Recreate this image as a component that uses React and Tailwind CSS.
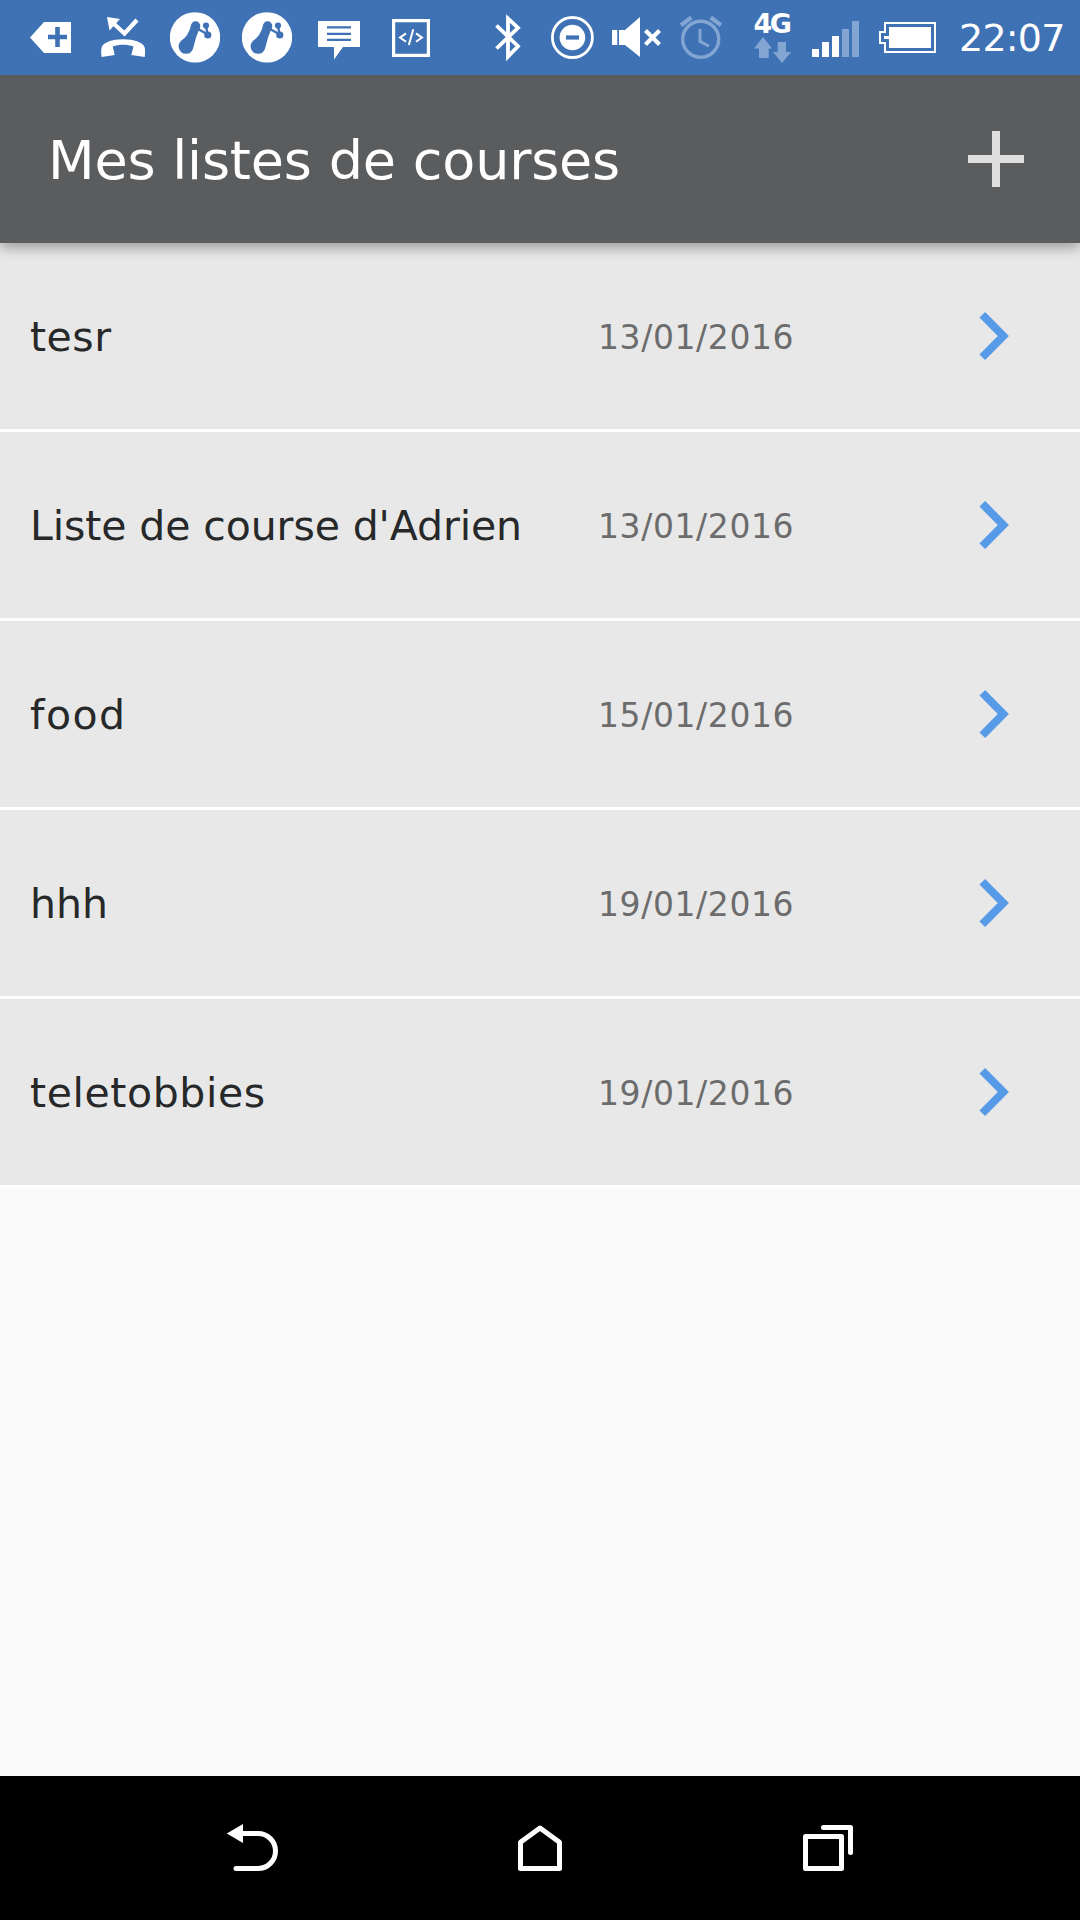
const LISTS = [
  { name: "tesr", date: "13/01/2016", tracking: "tracking-[0.5px]" },
  { name: "Liste de course d'Adrien", date: "13/01/2016", tracking: "tracking-[-0.1px]" },
  { name: "food", date: "15/01/2016", tracking: "tracking-[1.5px]" },
  { name: "hhh", date: "19/01/2016", tracking: "tracking-normal" },
  { name: "teletobbies", date: "19/01/2016", tracking: "tracking-[0.6px]" },
];

function Molecule() {
  return (
    <svg viewBox="170 0 50 75" className="h-[75px] w-[50px]" fill="#3f72b5" stroke="#3f72b5">
      <circle cx="195" cy="37.4" r="25.2" fill="#fff" stroke="none" />
      <circle cx="186" cy="46.4" r="7.4" stroke="none" />
      <circle cx="195.6" cy="26" r="4.7" stroke="none" />
      <circle cx="206" cy="25.6" r="3.1" stroke="none" />
      <circle cx="207.8" cy="35" r="3.6" stroke="none" />
      <path d="M181 41Q188.500 36 191.200 25L200 27.500Q196 36 193.400 47Z" stroke="none" />
      <path d="M197 28.500L207 34M206 26L207.600 35" fill="none" strokeWidth="2.400" />
    </svg>
  );
}

function StatusBar() {
  return (
    <div className="relative z-20 flex h-[75px] items-center bg-[#3f72b5] pl-[30px] text-white">
      <svg viewBox="30 0 41 75" className="h-[75px] w-[41px]" fill="#fff">
        <path d="M30 37.500L44 22H71V53H44Z" />
        <path d="M48 37H67M57.500 27V47" stroke="#3f72b5" strokeWidth="4.600" />
      </svg>
      <svg viewBox="100 0 46 75" className="ml-[29px] h-[75px] w-[46px]" fill="#fff">
        <path d="M107 17L120 19L109.500 30.500Z" />
        <path d="M112 22L124.500 33.500L137 20" fill="none" stroke="#fff" strokeWidth="4.200" />
        <path d="M101.600 57C101.100 53 101 50 101.600 47.500C103 42.500 112 39.300 123 39.300S143.500 42.500 144.700 47.500C145.300 50 145.200 53 144.700 57L131.300 55L133.500 46.500C127 44 119 44 112.700 46.500L114.700 55Z" />
      </svg>
      <div className="ml-[24px] flex gap-[22px]">
        <Molecule />
        <Molecule />
      </div>
      <svg viewBox="318 0 42 75" className="ml-[26px] h-[75px] w-[42px]" fill="#fff">
        <path d="M318 21H360V47H343L334 59.500V47H318Z" />
        <path d="M327 27.300H351M327 33.800H351M327 39.800H351" stroke="#3f72b5" strokeWidth="2.200" />
      </svg>
      <svg viewBox="392 0 38 75" className="ml-[32px] h-[75px] w-[38px]" fill="none" stroke="#fff">
        <path d="M393.600 20.600H428.400V55.400H393.600Z" strokeWidth="3.200" />
        <path d="M406 33.400L400 37.600L406 41.800M416 33.400L422 37.600L416 41.800M413.300 29.300L408.800 45" strokeWidth="2" />
      </svg>
      <svg viewBox="495 0 27 75" className="ml-[65px] h-[75px] w-[27px]" fill="none" stroke="#fff" strokeWidth="3.800">
        <path d="M496.500 25.500L518 46.200L508 56.500V18.500L518 27.800L496.500 48.500" />
      </svg>
      <svg viewBox="550 0 44 75" className="ml-[28px] h-[75px] w-[44px]" fill="none">
        <circle cx="572.400" cy="37.500" r="20" stroke="#fff" strokeWidth="2.800" />
        <circle cx="572.400" cy="37.500" r="12.800" fill="#fff" />
        <path d="M566 37.500H579" stroke="#3f72b5" strokeWidth="4.200" />
      </svg>
      <svg viewBox="612 0 50 75" className="ml-[18px] h-[75px] w-[50px]" fill="#fff">
        <path d="M612 30H617.300V45H612ZM619 30H625L640 17V57L625 45H619Z" />
        <path d="M645.500 30.500L659.500 44.500M659.500 30.500L645.500 44.500" stroke="#fff" strokeWidth="4.200" />
      </svg>
      <svg viewBox="679 0 44 75" className="ml-[17px] h-[75px] w-[44px]" fill="none" stroke="#83a5d2">
        <circle cx="700.700" cy="39.300" r="18" strokeWidth="3.400" />
        <path d="M700 29V41.300L709 46.300" strokeWidth="3" />
        <path d="M681 25.200L691.300 17.500M710.700 17.500L721 25.200" strokeWidth="4.200" />
      </svg>
      <div className="ml-[25px] flex h-[75px] w-[49px] flex-col items-center pt-[10px]">
        <span className="h-[27px] pr-[2px] text-[27px] leading-[28px] font-bold tracking-[-2.5px] whitespace-nowrap">4G</span>
        <svg viewBox="748 37 49 26" className="h-[26px] w-[49px]" fill="#83a5d2">
          <path d="M763 37L772.200 48.500H768.700V58H759V48.500H754ZM777.700 42H786V52H791.200L782 63L773 52H777.700Z" />
        </svg>
      </div>
      <svg viewBox="812 0 47 75" className="ml-[15px] h-[75px] w-[47px]">
        <path d="M812 49H819V57H812ZM822 42H829V57H822ZM832 36H839V57H832Z" fill="#fff" />
        <path d="M842 29H849V57H842ZM852 21H859V57H852Z" fill="#83a5d2" />
      </svg>
      <svg viewBox="879 0 57 75" className="ml-[20px] h-[75px] w-[57px]">
        <path d="M885 23H935V52H885V43H880V32H885Z" fill="none" stroke="#fff" strokeWidth="2" />
        <path d="M889 27H931V48H889V39H884V36H889Z" fill="#fff" />
      </svg>
      <span className="ml-[23px] pt-[1px] text-[38px] leading-none tracking-[-0.8px] whitespace-nowrap">22:07</span>
    </div>
  );
}

function Header() {
  return (
    <header className="relative z-10 flex h-[168px] items-center justify-between bg-[#5b5c5e] pr-[56px] pl-[48px] shadow-[0_5px_12px_rgba(0,0,0,0.32)]">
      <h1 className="pt-[4px] text-[54px] leading-none tracking-[-0.2px] whitespace-nowrap text-white">Mes listes de courses</h1>
      <svg viewBox="0 0 56 56" className="size-[56px]" fill="none" stroke="#dedede" strokeWidth="8">
        <path d="M0 28H24M32 28H56M28 0V56" />
      </svg>
    </header>
  );
}

function ListRow({ name, date, tracking }) {
  return (
    <li className="flex h-[189px] items-center border-b-[3px] border-white bg-[#e8e8e8] pl-[30px]">
      <span className={"w-[568px] pt-[2px] text-[41px] leading-none whitespace-nowrap text-[#262829] " + tracking}>{name}</span>
      <span className="w-[381px] pt-[2px] text-[33px] leading-none tracking-[0.6px] whitespace-nowrap text-[#6c6c6c]">{date}</span>
      <svg viewBox="0 0 30 48" className="h-[48px] w-[30px]" fill="none" stroke="#579ae8" strokeWidth="8">
        <path d="M3.300 2.800L24.300 24L3.300 45.200" />
      </svg>
    </li>
  );
}

function NavBar() {
  return (
    <nav className="flex h-[144px] items-center bg-black pl-[226px]">
      <svg viewBox="226 1776 54 144" className="h-[144px] w-[54px]" fill="none" stroke="#fff" strokeWidth="5">
        <path d="M226.800 1833.500L243 1824V1843Z" fill="#fff" stroke="none" />
        <path d="M241 1833.500H258A17.500 17.500 0 0 1 258 1868.500H236" strokeLinecap="round" />
      </svg>
      <svg viewBox="517 1776 46 144" className="ml-[237px] h-[144px] w-[46px]" fill="none" stroke="#fff" strokeWidth="5" strokeLinejoin="round">
        <path d="M540 1828L559.500 1842.300V1868.500H520.500V1842.300Z" />
      </svg>
      <svg viewBox="802 1776 52 144" className="ml-[239px] h-[144px] w-[52px]" fill="none" stroke="#fff" strokeWidth="5" strokeLinejoin="round" strokeLinecap="round">
        <path d="M805.500 1836.500H841.500V1868.500H805.500ZM823.500 1827.500H850.500V1852.500" />
      </svg>
    </nav>
  );
}

export default function App() {
  return (
    <div className="flex h-[1920px] w-[1080px] flex-col bg-[#fafafa] font-['DejaVu_Sans',sans-serif]">
      <StatusBar />
      <Header />
      <ul className="flex-1">
        {LISTS.map((list) => (
          <ListRow key={list.name} {...list} />
        ))}
      </ul>
      <NavBar />
    </div>
  );
}
